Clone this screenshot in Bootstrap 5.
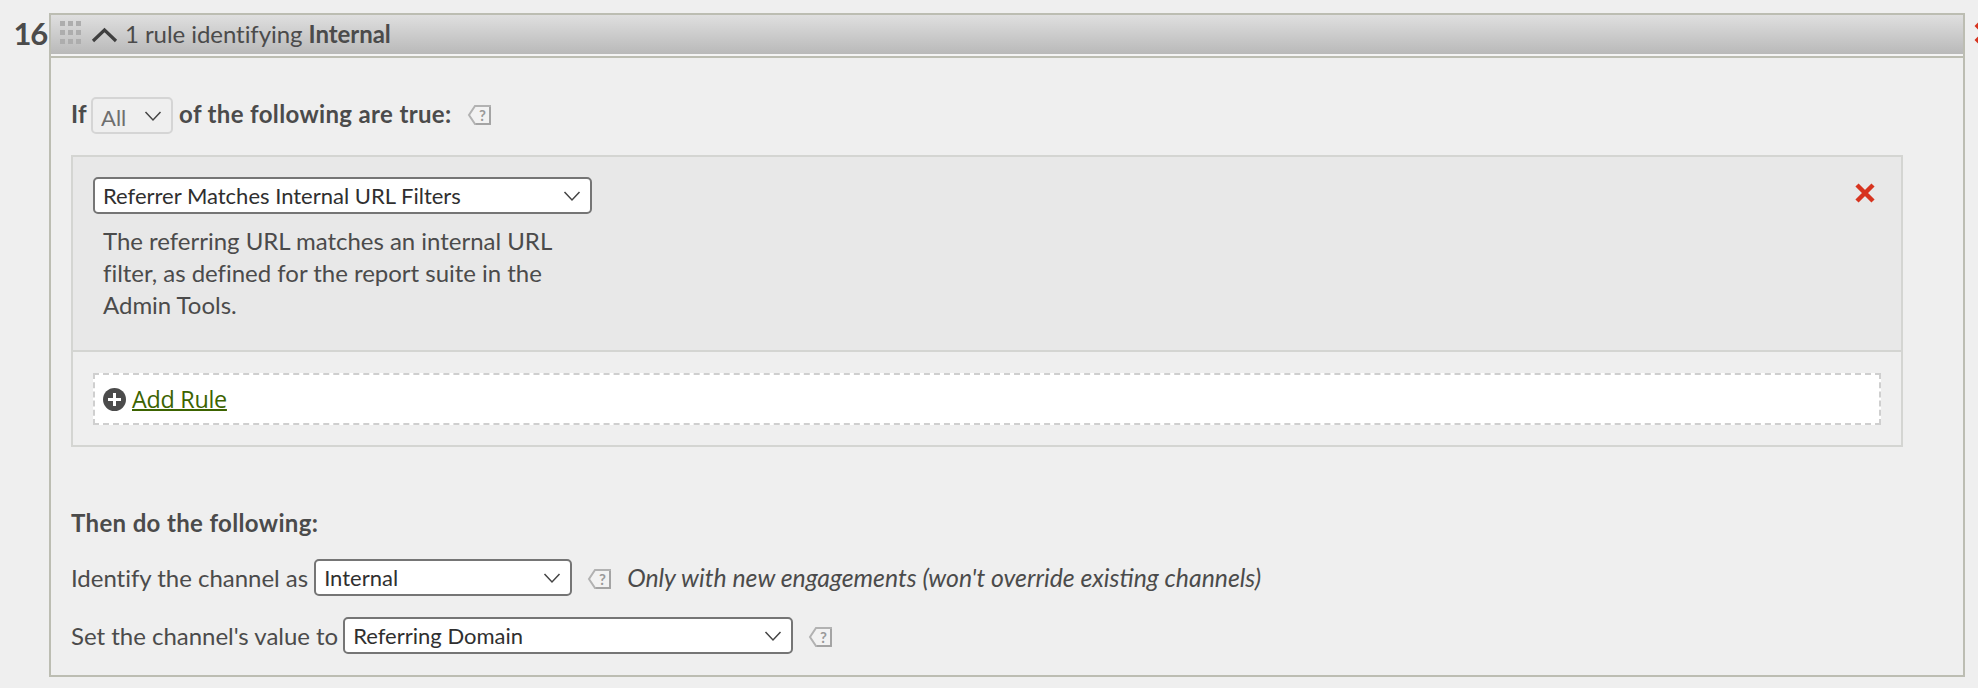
<!DOCTYPE html>
<html lang="en"><head><meta charset="utf-8"><title>Rule</title>
<link href="https://cdn.jsdelivr.net/npm/bootstrap@5.3.0/dist/css/bootstrap.min.css" rel="stylesheet">
<style>
html,body{height:688px;overflow:hidden}
body{background:#efefef;color:#4b4b4b;font-family:Lato,sans-serif;font-size:24px;letter-spacing:-.02px;line-height:32px}
.outer-wrap{padding-top:13px;width:2000px}
.num-col{width:49px;padding:5px 2px 0 0;text-align:right;font-weight:700;font-size:31px;letter-spacing:-1.2px;line-height:30px}
.rule-panel{width:1916px;height:664px;border:2px solid #bcbdb2;flex:none}
.rule-head{height:41px;background:linear-gradient(#dfdfdf,#b9b9b9);border-bottom:2px solid #f4f4f4;padding-left:9px;box-shadow:0 2px 0 #bcbdb2}
.rule-head .grip{margin-top:-4px}
.head-label{padding-bottom:2px;letter-spacing:-.06px}
.chev{margin:0 7px 0 9px}
.rule-body{padding:37px 0 0 20px}
.bold-row{font-weight:700;letter-spacing:.35px}
.sel{display:block;width:auto;height:37px;padding:0 30px 2px 8px;font-size:22px;line-height:33px;letter-spacing:0;color:#2f2f2f;border:2px solid #757575;border-radius:5px;background-color:#fff;background-image:url("data:image/svg+xml,%3Csvg xmlns='http://www.w3.org/2000/svg' viewBox='0 0 18 12'%3E%3Cpath d='M1.500 2 9 10l7.500-8' fill='none' stroke='%23444' stroke-width='1.500'/%3E%3C/svg%3E");background-position:right 9px center;background-size:18px 12px;font-family:inherit}
.sel-all{width:82px;background-color:#efefef;border-color:#d5d5d5;color:#6e6e6e;margin:4px 6px 0 4px;padding:2px 30px 0 8px;font-weight:400;line-height:33px}
.sel-long{width:499px}.sel-chan{width:258px;margin:0 15px 0 6px}.sel-val{width:450px;margin:0 15px 0 5px}
.cond-box{width:1832px;margin-top:21px;border:2px solid #d4d5d2}
.cond-top{height:195px;background:#e8e8e8;border-bottom:2px solid #d4d5d2;padding:20px 25px 0 20px}
.cond-x{margin-top:5px}
.cond-desc{width:470px;padding:11px 0 0 10px}
.cond-bottom{padding:21px 20px 20px 20px}
.add-strip{height:52px;background:#fff;border:2px dashed #cfcfcf;padding-left:8px}
.add-link{color:#3c6300;font-family:"Open Sans",sans-serif;font-size:23.400px;letter-spacing:-.3px;text-decoration:underline;text-decoration-thickness:2px;margin-left:6px}
.then-head{margin-top:60px}
.chan-row{height:37px}
.gap-a{margin-top:20px}.gap-b{margin-top:21px}
.note{font-style:italic;font-size:24.800px;letter-spacing:0;margin-left:15px}
.help-i{margin-top:3px}
.help-lead{margin-left:15px}
</style></head>
<body>
<div class="outer-wrap d-flex align-items-start">
  <div class="num-col">16</div>
  <div class="rule-panel">
    <div class="rule-head d-flex align-items-center">
      <svg class="grip" width="22" height="24" viewBox="0 0 22 24" fill="#adadad"><rect x="0" y="0" width="5" height="5"/><rect x="8" y="0" width="5" height="5"/><rect x="16" y="0" width="5" height="5"/><rect x="0" y="9" width="5" height="5"/><rect x="8" y="9" width="5" height="5"/><rect x="16" y="9" width="5" height="5"/><rect x="0" y="18" width="5" height="5"/><rect x="8" y="18" width="5" height="5"/><rect x="16" y="18" width="5" height="5"/></svg>
      <svg class="chev" width="27" height="16" viewBox="0 0 27 16"><path d="M2 14 13.500 3 25 14" fill="none" stroke="#3f3f3f" stroke-width="3.200"/></svg>
      <span class="head-label">1 rule identifying <b>Internal</b></span>
    </div>
    <div class="rule-body">
      <div class="d-flex align-items-center bold-row">
        <span>If</span>
        <select class="form-select sel sel-all" aria-label="Match"><option>All</option></select>
        <span>of the following are true:</span>
        <svg class="help-i help-lead" width="25" height="22" viewBox="0 0 25 22"><path d="M8 2h15v18H8L2 11Z" fill="#f2f2f2" stroke="#b2b2b2" stroke-width="2"/><path d="M23 3v17H9" fill="none" stroke="#a0a0a0" stroke-width="1.500"/><text x="15.500" y="17" font-size="15" font-weight="700" text-anchor="middle" fill="#9a9a9a">?</text></svg>
      </div>
      <div class="cond-box">
        <div class="cond-top d-flex justify-content-between align-items-start">
          <div>
            <select class="form-select sel sel-long" aria-label="Condition"><option>Referrer Matches Internal URL Filters</option></select>
            <div class="cond-desc">The referring URL matches an internal URL filter, as defined for the report suite in the Admin Tools.</div>
          </div>
          <svg class="cond-x" width="22" height="22" viewBox="0 0 22 22"><path d="M3 3 19 19M19 3 3 19" stroke="#d7341f" stroke-width="4.500" fill="none"/></svg>
        </div>
        <div class="cond-bottom">
          <div class="add-strip d-flex align-items-center">
            <svg width="23" height="23" viewBox="0 0 23 23"><circle cx="11.500" cy="11.500" r="11.500" fill="#4b4b4b"/><path d="M11.500 5v13M5 11.500h13" stroke="#fff" stroke-width="3"/></svg>
            <a class="add-link" href="#">Add Rule</a>
          </div>
        </div>
      </div>
      <div class="then-head bold-row">Then do the following:</div>
      <div class="chan-row gap-a d-flex align-items-center">
        <span>Identify the channel as</span>
        <select class="form-select sel sel-chan" aria-label="Channel"><option>Internal</option></select>
        <svg class="help-i" width="25" height="22" viewBox="0 0 25 22"><path d="M8 2h15v18H8L2 11Z" fill="#f2f2f2" stroke="#b2b2b2" stroke-width="2"/><path d="M23 3v17H9" fill="none" stroke="#a0a0a0" stroke-width="1.500"/><text x="15.500" y="17" font-size="15" font-weight="700" text-anchor="middle" fill="#9a9a9a">?</text></svg>
        <span class="note">Only with new engagements (won't override existing channels)</span>
      </div>
      <div class="chan-row gap-b d-flex align-items-center">
        <span>Set the channel's value to</span>
        <select class="form-select sel sel-val" aria-label="Value"><option>Referring Domain</option></select>
        <svg class="help-i" width="25" height="22" viewBox="0 0 25 22"><path d="M8 2h15v18H8L2 11Z" fill="#f2f2f2" stroke="#b2b2b2" stroke-width="2"/><path d="M23 3v17H9" fill="none" stroke="#a0a0a0" stroke-width="1.500"/><text x="15.500" y="17" font-size="15" font-weight="700" text-anchor="middle" fill="#9a9a9a">?</text></svg>
      </div>
    </div>
  </div>
  <svg class="ms-2 mt-2" width="24" height="24" viewBox="0 0 22 22"><path d="M3 3 19 19M19 3 3 19" stroke="#d7341f" stroke-width="4.500" fill="none"/></svg>
</div>
<script src="https://cdn.jsdelivr.net/npm/bootstrap@5.3.0/dist/js/bootstrap.bundle.min.js"></script>
</body></html>
